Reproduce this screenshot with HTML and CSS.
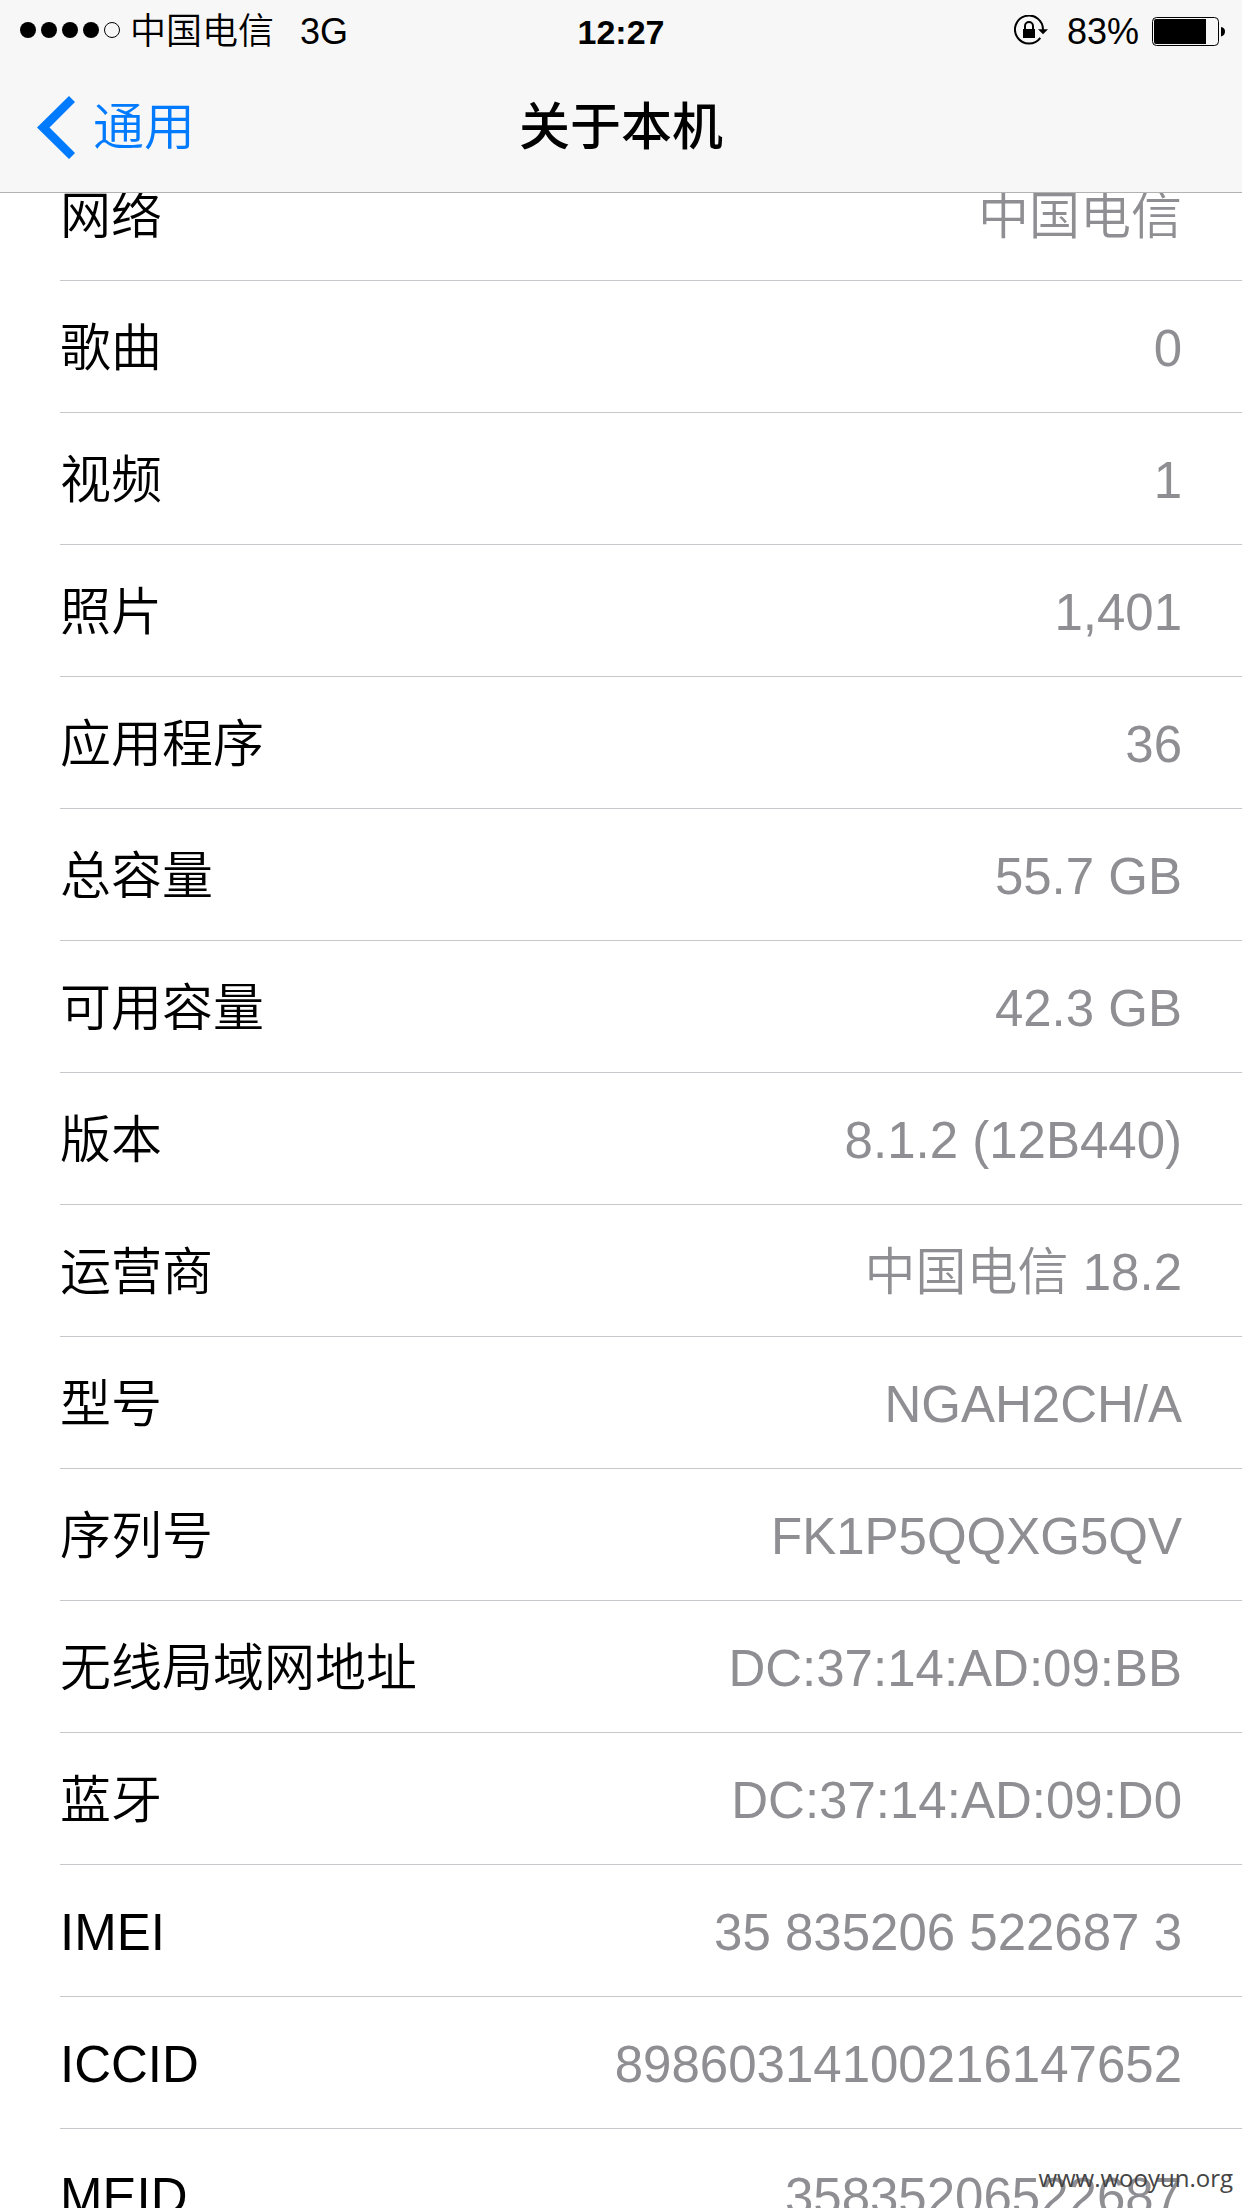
FILE: index.html
```html
<!DOCTYPE html>
<html lang="zh-CN">
<head>
<meta charset="utf-8">
<meta name="viewport" content="width=device-width, initial-scale=1">
<title>关于本机</title>
<link rel="stylesheet" href="styles.css">
</head>
<body>
<header class="top">
  <div class="status">
    <div class="status-left">
      <svg class="signal" viewBox="0 0 100 16" aria-hidden="true"><circle cx="8" cy="8" r="8"/><circle cx="29" cy="8" r="8"/><circle cx="50" cy="8" r="8"/><circle cx="71" cy="8" r="8"/><circle class="signal-off" cx="92" cy="8" r="7.5"/></svg>
      <span class="carrier">中国电信</span>
      <span>3G</span>
    </div>
    <span class="time">12:27</span>
    <div class="status-right">
      <svg class="lock" viewBox="0 0 34 30" aria-hidden="true"><path class="line" d="M26.300 22.800A14 14 0 1 1 29 15"/><path d="M24 14.300h10l-5 5z"/><rect x="9" y="14" width="12" height="9"/><path class="line" d="M11 14.500v-3.500a4 4 0 0 1 8 0v3.500"/></svg>
      <span>83%</span>
      <svg class="battery" viewBox="0 0 73 29" aria-hidden="true"><rect class="shell" x=".5" y=".5" width="66" height="28" rx="4"/><path d="M54 2v25H4a2 2 0 0 1-2-2V4a2 2 0 0 1 2-2z"/><path d="M69 10q4 .5 4 4.500t-4 5z"/></svg>
    </div>
  </div>
  <nav class="nav">
    <a class="back" href="#"><svg class="chevron" viewBox="0 0 38 63" aria-hidden="true"><path d="M0 31.500L32 0l6 6L12.500 31.500L38 57l-6 6z"/></svg>通用</a>
    <h1 class="title">关于本机</h1>
  </nav>
</header>
<main class="viewport">
  <dl class="list">
    <div class="row"><dt>网络</dt><dd>中国电信</dd></div>
    <div class="row"><dt>歌曲</dt><dd>0</dd></div>
    <div class="row"><dt>视频</dt><dd>1</dd></div>
    <div class="row"><dt>照片</dt><dd>1,401</dd></div>
    <div class="row"><dt>应用程序</dt><dd>36</dd></div>
    <div class="row"><dt>总容量</dt><dd>55.7 GB</dd></div>
    <div class="row"><dt>可用容量</dt><dd>42.3 GB</dd></div>
    <div class="row"><dt>版本</dt><dd>8.1.2 (12B440)</dd></div>
    <div class="row"><dt>运营商</dt><dd>中国电信 18.2</dd></div>
    <div class="row"><dt>型号</dt><dd>NGAH2CH/A</dd></div>
    <div class="row"><dt>序列号</dt><dd>FK1P5QQXG5QV</dd></div>
    <div class="row"><dt>无线局域网地址</dt><dd>DC:37:14:AD:09:BB</dd></div>
    <div class="row"><dt>蓝牙</dt><dd>DC:37:14:AD:09:D0</dd></div>
    <div class="row"><dt>IMEI</dt><dd>35 835206 522687 3</dd></div>
    <div class="row"><dt>ICCID</dt><dd>89860314100216147652</dd></div>
    <div class="row"><dt>MEID</dt><dd>35835206522687</dd></div>
  </dl>
</main>
<div class="watermark">www.wooyun.org</div>
</body>
</html>
```
FILE: styles.css
```css
* {
  box-sizing: border-box;
}

body {
  display: flex;
  flex-direction: column;
  height: 100vh;
  margin: 0;
  overflow: hidden;
  background: #fff;
  color: #000;
  font-family: "Liberation Sans", "Noto Sans CJK SC", sans-serif;
  font-weight: 350;
}

.top {
  flex: none;
  background: #f7f7f7;
  border-bottom: 1px solid #b2b2b2;
}

.status {
  display: grid;
  grid-template-columns: 1fr auto 1fr;
  align-items: center;
  height: 64px;
  padding: 0 17px;
  font-size: 36px;
  line-height: 64px;
}

.status-left,
.status-right {
  display: flex;
  align-items: center;
}

.status-left {
  gap: 10px;
}

.status-right {
  justify-content: flex-end;
  gap: 13px;
}

.carrier {
  margin-right: 16px;
}

.time {
  font-size: 34px;
  font-weight: 700;
}

.signal {
  width: 100px;
  height: 16px;
  margin: 0 0 4px 3px;
}

.signal-off {
  fill: none;
  stroke: #000;
  stroke-width: 1;
}

.lock {
  width: 34px;
  height: 30px;
  margin: 0 6px 4px 0;
}

.line {
  fill: none;
  stroke: #000;
  stroke-width: 2;
}

.battery {
  width: 73px;
  height: 29px;
  margin-bottom: 2px;
}

.shell {
  fill: none;
  stroke: #000;
  stroke-width: 1;
}

.nav {
  display: grid;
  grid-template-columns: 1fr auto 1fr;
  align-items: center;
  height: 128px;
  padding: 0 37px;
  line-height: 64px;
}

.back {
  display: flex;
  align-items: center;
  gap: 18px;
  color: #007aff;
  font-size: 51px;
  text-decoration: none;
}

.chevron {
  width: 38px;
  height: 63px;
  margin-bottom: 2px;
  fill: currentColor;
}

.title {
  margin: 0;
  font-size: 51px;
  font-weight: 500;
}

.viewport {
  display: flex;
  flex: 1;
  flex-direction: column;
  min-height: 0;
  overflow: hidden;
}

.list {
  margin: -44px 0 0 60px;
}

.row {
  display: flex;
  align-items: center;
  justify-content: space-between;
  height: 132px;
  padding: 4px 60px 0 0;
  border-bottom: 1px solid #c8c7cc;
  font-size: 51px;
  line-height: 64px;
}

.row dd {
  margin: 0;
  color: #8e8e93;
}

.watermark {
  position: absolute;
  right: 9px;
  bottom: 14px;
  color: #444;
  font-family: "Open Sans", sans-serif;
  font-size: 24px;
  font-weight: 400;
  line-height: 32px;
}
```
